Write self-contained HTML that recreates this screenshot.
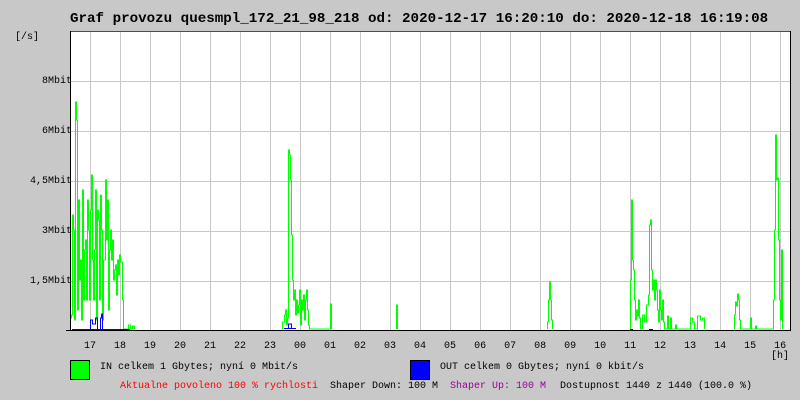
<!DOCTYPE html>
<html><head><meta charset="utf-8"><style>
body{margin:0;width:800px;height:400px;background:#c8c8c8;overflow:hidden;position:relative;font-family:"Liberation Mono",monospace;}
.t{position:absolute;white-space:pre;font-size:10px;line-height:12px;color:#000;}
</style></head><body>
<div class="t" style="left:70px;top:11px;font-size:14.2px;line-height:16px;font-weight:bold;">Graf provozu quesmpl_172_21_98_218 od: 2020-12-17 16:20:10 do: 2020-12-18 16:19:08</div>
<svg width="800" height="400" style="position:absolute;left:0;top:0" shape-rendering="crispEdges">
<rect x="70" y="31" width="720" height="299" fill="#fff"/>
<g stroke="#c8c8c8" stroke-width="1">
<path d="M90.5 31V330M120.5 31V330M150.5 31V330M180.5 31V330M210.5 31V330M240.5 31V330M270.5 31V330M300.5 31V330M330.5 31V330M360.5 31V330M390.5 31V330M420.5 31V330M450.5 31V330M480.5 31V330M510.5 31V330M540.5 31V330M570.5 31V330M600.5 31V330M630.5 31V330M660.5 31V330M690.5 31V330M720.5 31V330M750.5 31V330M780.5 31V330"/>
<path d="M66 81.5H790M66 131.5H790M66 181.5H790M66 231.5H790M66 281.5H790"/>
</g>
<g fill="none" stroke="#00ff00" stroke-width="1">
<path d="M70.5 329 V318 H71.5 V315 H72.5 V215 H73.5 V230 H74.5 V320 H75.5 V102 H76.5 V120 H77.5 V310 H78.5 V200 H79.5 V280 H80.5 V260 H81.5 V320 H82.5 V190 H83.5 V300 H84.5 V250 H85.5 V240 H86.5 V300 H87.5 V200 H88.5 V230 H89.5 V300 H90.5 V210 H91.5 V175 H92.5 V260 H93.5 V300 H94.5 V250 H95.5 V190 H96.5 V320 H97.5 V210 H98.5 V220 H99.5 V300 H100.5 V195 H101.5 V230 H102.5 V320 H103.5 V260 H104.5 V260 H105.5 V180 H106.5 V240 H107.5 V200 H108.5 V310 H109.5 V250 H110.5 V230 H111.5 V260 H112.5 V240 H113.5 V280 H114.5 V270 H115.5 V265 H116.5 V295 H117.5 V260 H118.5 V275 H119.5 V255 H120.5 V262 H121.5 V262 H122.5 V300 H123.5 V329 H128.5 V325 H130.5 V329 H132.5 V326 H134.5 V329"/>
<path d="M282.5 329 V322 H284.5 V315 H285.5 V310 H286.5 V325 H287.5 V318 H288.5 V150 H289.5 V155 H290.5 V180 H291.5 V235 H292.5 V280 H293.5 V300 H294.5 V290 H295.5 V315 H296.5 V300 H297.5 V313 H298.5 V305 H299.5 V290 H300.5 V325 H301.5 V300 H302.5 V310 H303.5 V295 H304.5 V320 H305.5 V300 H306.5 V290 H307.5 V310 H308.5 V325 H309.5 V329 H330.5 V304 H331.5 V329"/>
<path d="M396.5 329 V305 H397.5 V329 M547.5 329 V322 H548.5 V300 H549.5 V282 H550.5 V300 H551.5 V320 H552.5 V329"/>
<path d="M630.5 329 V280 H631.5 V200 H632.5 V260 H633.5 V270 H634.5 V300 H635.5 V320 H636.5 V310 H637.5 V316 H638.5 V300 H639.5 V318 H640.5 V329 H642.5 V315 H644.5 V322 H646.5 V305 H648.5 V295 H649.5 V225 H650.5 V220 H651.5 V270 H652.5 V290 H653.5 V280 H654.5 V300 H655.5 V280 H656.5 V290 H657.5 V310 H658.5 V322 H659.5 V290 H660.5 V310 H661.5 V320 H662.5 V300 H663.5 V322 H664.5 V329 H667.5 V316 H668.5 V329 H670.5 V318 H671.5 V329 H675.5 V325 H676.5 V329 H690.5 V318 H692.5 V322 H694.5 V329 H697.5 V316 H700.5 V320 H702.5 V318 H704.5 V329"/>
<path d="M734.5 329 V315 H735.5 V302 H736.5 V306 H737.5 V294 H738.5 V300 H739.5 V320 H740.5 V329 H750.5 V318 H751.5 V329 H755.5 V326 H756.5 V329 H773.5 V300 H774.5 V230 H775.5 V135 H776.5 V180 H777.5 V178 H778.5 V240 H779.5 V300 H780.5 V320 H781.5 V250 H782.5 V329"/>
</g>
<g fill="none" stroke="#0000ff" stroke-width="1">
<path d="M72 329.5 H130 M90.5 329 V320 H92.5 V324 H95.5 V318 H97.5 V329 M100.5 329 V318 H101.5 V314 H102.5 V329 M284 328.5 H296 M288.5 329 V324 H291.5 V329 M630 329.5 H633 M649 329.5 H653"/>
</g>
<path d="M70 31.5H790" stroke="#ff0000" stroke-width="1"/>
<path d="M70.5 31V331M66 330.5H790M790.5 31V331" stroke="#000" stroke-width="1"/>
<rect x="70.5" y="360.5" width="19" height="19" fill="#00ff00" stroke="#000"/>
<rect x="410.5" y="360.5" width="19" height="19" fill="#0000ff" stroke="#000"/>
</svg>
<div class="t" style="left:15px;top:32px">[/s]</div>
<div class="t" style="left:0;width:72px;text-align:right;top:76px">8Mbit</div>
<div class="t" style="left:0;width:72px;text-align:right;top:126px">6Mbit</div>
<div class="t" style="left:0;width:72px;text-align:right;top:176px">4,5Mbit</div>
<div class="t" style="left:0;width:72px;text-align:right;top:226px">3Mbit</div>
<div class="t" style="left:0;width:72px;text-align:right;top:276px">1,5Mbit</div>
<div class="t" style="left:84px;top:341px;word-spacing:0">17   18   19   20   21   22   23   00   01   02   03   04   05   06   07   08   09   10   11   12   13   14   15   16</div>
<div class="t" style="left:771px;top:351px">[h]</div>
<div class="t" style="left:100px;top:362px">IN celkem 1 Gbytes; nyní 0 Mbit/s</div>
<div class="t" style="left:440px;top:362px">OUT celkem 0 Gbytes; nyní 0 kbit/s</div>
<div class="t" style="left:120px;top:381px;color:#ff0000">Aktualne povoleno 100 % rychlosti</div>
<div class="t" style="left:330px;top:381px">Shaper Down: 100 M</div>
<div class="t" style="left:450px;top:381px;color:#990099">Shaper Up: 100 M</div>
<div class="t" style="left:560px;top:381px">Dostupnost 1440 z 1440 (100.0 %)</div>
</body></html>
